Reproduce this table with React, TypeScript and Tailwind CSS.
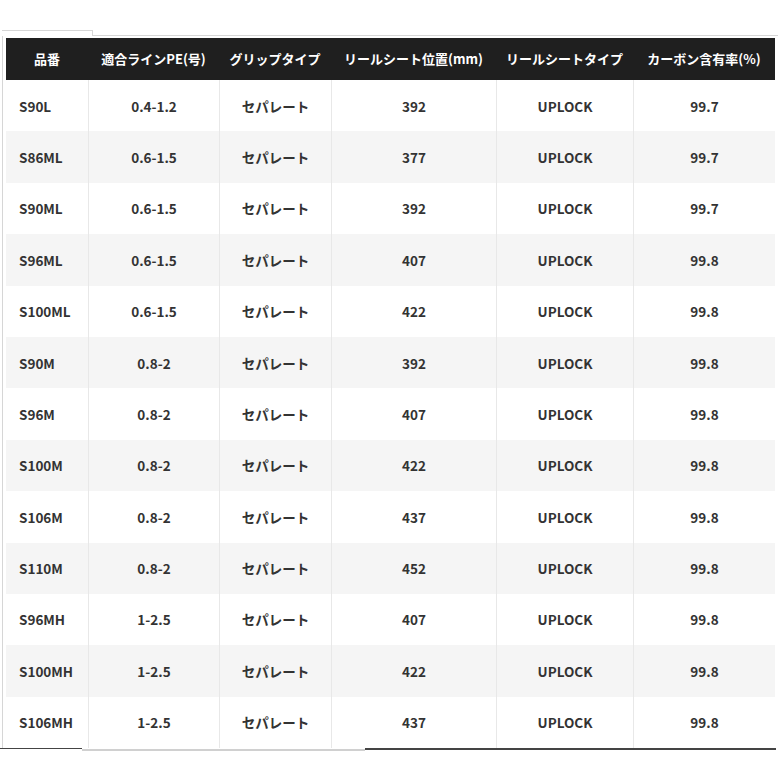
import React from "react";

const rows: [string, string, string, string, string, string][] = [
  ["S90L", "0.4-1.2", "セパレート", "392", "UPLOCK", "99.7"],
  ["S86ML", "0.6-1.5", "セパレート", "377", "UPLOCK", "99.7"],
  ["S90ML", "0.6-1.5", "セパレート", "392", "UPLOCK", "99.7"],
  ["S96ML", "0.6-1.5", "セパレート", "407", "UPLOCK", "99.8"],
  ["S100ML", "0.6-1.5", "セパレート", "422", "UPLOCK", "99.8"],
  ["S90M", "0.8-2", "セパレート", "392", "UPLOCK", "99.8"],
  ["S96M", "0.8-2", "セパレート", "407", "UPLOCK", "99.8"],
  ["S100M", "0.8-2", "セパレート", "422", "UPLOCK", "99.8"],
  ["S106M", "0.8-2", "セパレート", "437", "UPLOCK", "99.8"],
  ["S110M", "0.8-2", "セパレート", "452", "UPLOCK", "99.8"],
  ["S96MH", "1-2.5", "セパレート", "407", "UPLOCK", "99.8"],
  ["S100MH", "1-2.5", "セパレート", "422", "UPLOCK", "99.8"],
  ["S106MH", "1-2.5", "セパレート", "437", "UPLOCK", "99.8"],
];

const headers = [
  "品番",
  "適合ラインPE(号)",
  "グリップタイプ",
  "リールシート位置(mm)",
  "リールシートタイプ",
  "カーボン含有率(%)",
];

const grid = "grid grid-cols-[82px_131px_112px_165px_137px_142px]";

export default function App() {
  return (
    <div
      className="w-[778px] h-[778px] bg-white overflow-hidden pt-[30px]"
      style={{ fontFamily: '"Noto Sans CJK JP", "Noto Sans", sans-serif' }}
    >
      <div className="flex h-[6px]">
        <div className="w-[2px]" />
        <div className="w-[91px] border-t border-r border-[#d6d6d6]" />
        <div className="flex-1 border-b border-[#d6d6d6]" />
      </div>
      <div className="ml-[2px] border-l border-[#d6d6d6] pt-[2px] pl-[3px]">
        <div className="w-[769px]">
          <div className={`${grid} h-[42px] bg-[#1f1f1f] text-white text-[13px] font-bold`}>
            {headers.map((h) => (
              <div key={h} className="flex items-center justify-center whitespace-nowrap">
                {h}
              </div>
            ))}
          </div>
          {rows.map((r, i) => (
            <div
              key={r[0]}
              className={`${grid} h-[51.4px] text-[13.5px] font-bold text-[#333333] ${
                i % 2 === 1 ? "bg-[#f5f5f5]" : "bg-white"
              }`}
            >
              {r.map((c, j) => (
                <div
                  key={j}
                  className={`flex items-center ${
                    j === 0 ? "justify-start pl-[13px]" : "justify-center border-l border-[#e8e8e8]"
                  }`}
                >
                  {c}
                </div>
              ))}
            </div>
          ))}
        </div>
      </div>
      <div className="flex">
        <div className="w-[82px] h-px bg-[#444444]" />
        <div className="w-[283px] h-[2px] mt-px bg-[#d0d0d0]" />
        <div className="w-[411px] h-[2px] bg-[#444444]" />
      </div>
    </div>
  );
}
